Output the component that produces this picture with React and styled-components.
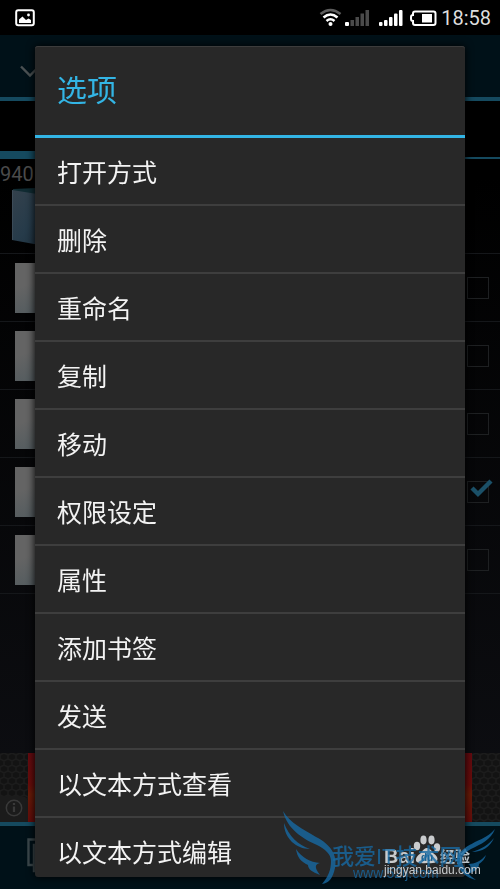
import React from 'react';
import styled, { createGlobalStyle } from 'styled-components';

const options = [
  '打开方式',
  '删除',
  '重命名',
  '复制',
  '移动',
  '权限设定',
  '属性',
  '添加书签',
  '发送',
  '以文本方式查看',
  '以文本方式编辑',
];

const files = [
  { id: 'file-1', checked: false },
  { id: 'file-2', checked: false },
  { id: 'file-3', checked: false },
  { id: 'file-4', checked: true },
  { id: 'file-5', checked: false },
];

const App = () => {
  return (
    <>
      <GlobalStyle />
      <Screen>
        <StatusBar>
          <svg width="20" height="18" viewBox="0 0 20 18">
            <rect x="1.2" y="1.2" width="17.6" height="15" rx="2" fill="none" stroke="#fff" strokeWidth="2" />
            <path d="M4 14V10.5L7.5 7.5L11 11L13.5 9.5L16 11V14Z" fill="#fff" />
            <circle cx="13.5" cy="6" r="1.4" fill="#fff" />
          </svg>
          <StatusRight>
            <StatusIcons />
            <Clock>18:58</Clock>
          </StatusRight>
        </StatusBar>
        <Header>
          <svg width="20" height="14" viewBox="0 0 20 14">
            <path d="M1 1.5L10 10.5L19 1.5" fill="none" stroke="#4b5153" strokeWidth="2.4" />
          </svg>
        </Header>
        <Tabs>
          <Tab $active />
          <Tab />
        </Tabs>
        <Path>940</Path>
        <FolderRow>
          <svg width="44" height="60" viewBox="0 0 44 60">
            <defs>
              <linearGradient id="folder" x1="0" y1="0" x2="1" y2="1">
                <stop offset="0" stopColor="#34414c" />
                <stop offset="0.5" stopColor="#263b4a" />
                <stop offset="1" stopColor="#1a2b38" />
              </linearGradient>
            </defs>
            <path d="M1 1L24 0L44 4V12L1 4Z" fill="#102b32" />
            <path d="M0 2L44 9V60L0 52Z" fill="url(#folder)" />
            <path d="M0 2V52" stroke="#4b5965" />
          </svg>
        </FolderRow>
        {files.map((file) => (
          <FileRow key={file.id}>
            <Thumb />
            <CheckLabel>
              <CheckInput type="checkbox" aria-label={file.id} defaultChecked={file.checked} />
              {file.checked && (
                <Tick width="24" height="20" viewBox="0 0 24 20">
                  <path d="M2 9L8 15L21 2" fill="none" stroke="#1b5068" strokeWidth="4.4" />
                </Tick>
              )}
            </CheckLabel>
          </FileRow>
        ))}
        <Ad>
          <Hexagons />
          <AdImage />
          <InfoIcon width="30" height="26" viewBox="0 0 30 26">
            <path d="M0 0H22Q29 1 29 9V26H0Z" fill="#1b1b1b" />
            <circle cx="14" cy="12" r="7.7" fill="none" stroke="#393939" strokeWidth="1.5" />
            <path d="M14 10.5V16M14 7V9" stroke="#393939" strokeWidth="2.2" />
          </InfoIcon>
        </Ad>
        <BottomBar>
          <svg width="36" height="40" viewBox="0 0 36 40">
            <path d="M24 1.5H1.5V27H7" fill="none" stroke="#3b474b" strokeWidth="2.4" />
            <path d="M7 7H34V33H7Z" fill="none" stroke="#3b474b" strokeWidth="2.4" />
          </svg>
        </BottomBar>
      </Screen>
      <Overlay>
        <Dialog role="dialog" aria-labelledby="options-title">
          <Title id="options-title">选项</Title>
          <List>
            {options.map((option) => (
              <li key={option}>
                <Option type="button">{option}</Option>
              </li>
            ))}
          </List>
        </Dialog>
      </Overlay>
      <Watermark />
    </>
  );
};

export default App;

const StatusIcons = () => (
  <svg width="120" height="20" viewBox="0 0 120 20">
    <g fill="none" strokeWidth="2.6">
      <path d="M1.5 6Q11.5 -2 21.5 6" stroke="#5d5d5d" />
      <path d="M4.5 9.5Q11.5 3.5 18.5 9.5M7.5 13Q11.5 9.5 15.5 13" stroke="#fff" />
    </g>
    <circle cx="11.5" cy="16" r="2" fill="#fff" />
    <rect x="26" y="14" width="4" height="4" rx="1" fill="#fff" />
    <g fill="#4a4a4a">
      <rect x="31.5" y="12" width="3.5" height="6" />
      <rect x="36.5" y="9" width="3.5" height="9" />
      <rect x="41.5" y="5.5" width="3.5" height="12.5" />
      <rect x="46.5" y="2" width="3.5" height="16" />
    </g>
    <g fill="#fff">
      <rect x="60" y="14" width="3.5" height="4" rx="1" />
      <rect x="65" y="12" width="3.5" height="6" rx="1" />
      <rect x="70" y="9" width="3.5" height="9" rx="1" />
      <rect x="75" y="5.5" width="3.5" height="12.5" rx="1" />
      <rect x="80" y="2" width="3.5" height="16" rx="1" />
      <rect x="103" y="6" width="10" height="8.5" />
    </g>
    <path d="M96 3.5H114.5Q116.5 3.5 116.5 5.5V15Q116.5 17 114.5 17H96Q94 17 94 15V13Q92 13 92 11V9Q92 7 94 7V5.5Q94 3.5 96 3.5Z" fill="none" stroke="#fff" strokeWidth="2" />
  </svg>
);

const Hexagons = () => (
  <HexSvg width="100%" height="100%">
    <defs>
      <pattern id="hex" width="8" height="12" patternUnits="userSpaceOnUse">
        <path d="M4 0L8 2V6L4 8L0 6V2ZM4 8V12" fill="none" stroke="#1c1c1c" strokeWidth="1.4" />
      </pattern>
    </defs>
    <rect width="100%" height="100%" fill="url(#hex)" />
  </HexSvg>
);

const Watermark = () => (
  <Mark width="222" height="84" viewBox="278 805 222 84">
    <g fill="#c9cbcd">
      <ellipse cx="417" cy="846" rx="3.2" ry="4.2" />
      <ellipse cx="423.5" cy="840" rx="3.1" ry="4.4" />
      <ellipse cx="431.5" cy="840" rx="3.1" ry="4.4" />
      <ellipse cx="437" cy="847.5" rx="3.2" ry="4.2" />
      <path d="M427 848Q430 848 433 853Q439 857 437 861Q435 864 427 863Q418 864 416 861Q415 857 421 853Q424 848 427 848Z" />
    </g>
    <text x="384" y="863" fontFamily="Liberation Sans, sans-serif" fontSize="20" fontWeight="700" fill="#c9cbcd">Bai</text>
    <text x="421" y="861" fontFamily="Liberation Sans, sans-serif" fontSize="10" fontWeight="700" fill="#1a5e8c">du</text>
    <text x="440" y="862" fontSize="15" fontWeight="700" fill="#b9c3c9">经验</text>
    <g fill="#1769a3" fillOpacity="0.8">
      <path d="M283 811C290 823 303 829 316 837C330 844 338 855 335 868C333 878 329 883 322 884C328 877 331 870 331 861C331 854 325 849 317 845C303 839 287 829 283 811Z" />
      <path d="M284 823C289 836 298 845 310 849C296 849 284 838 284 823Z" />
      <path d="M296 849C302 858 310 862 320 863C315 864 314 867 320 875C312 872 308 869 308 865C301 862 297 857 296 849Z" />
      <path d="M495 829C491 840 481 844 471 849C460 855 460 862 466 870C469 875 473 878 476 880C467 878 459 872 457 862C456 852 466 847 475 842C484 838 490 835 495 829Z" />
      <path d="M494 838C490 847 482 852 472 852C482 849 488 845 494 838Z" />
      <path d="M486 855C481 861 475 864 468 864C472 866 471 870 467 874C475 872 479 868 479 864C482 862 485 859 486 855Z" />
      <text x="332" y="864" fontFamily="Liberation Sans, Noto Sans CJK SC, sans-serif" fontSize="22" fontWeight="500">我爱IT技术网</text>
      <text x="353" y="878" fontFamily="Liberation Sans, sans-serif" fontSize="14">www.52ij.com</text>
    </g>
    <text x="384" y="874" fontFamily="Liberation Sans, sans-serif" fontSize="12" fill="#c9cbcd">jingyan.baidu.com</text>
  </Mark>
);

const GlobalStyle = createGlobalStyle`
  * {
    box-sizing: border-box;
  }
  body {
    margin: 0;
    background: #000;
    font-family: "Noto Sans", "Noto Sans CJK SC", sans-serif;
  }
`;

const Screen = styled.div`
  min-height: 100vh;
  display: flex;
  flex-direction: column;
  background: linear-gradient(#000 20%, #0d0e12 90%);
`;

const StatusBar = styled.div`
  height: 35px;
  padding: 1px 9px 0 15px;
  display: flex;
  align-items: center;
  justify-content: space-between;
  background: #000;
`;

const StatusRight = styled.div`
  display: flex;
  align-items: center;
  gap: 2px;
`;

const Clock = styled.span`
  color: #ddd;
  font-family: Roboto, sans-serif;
  font-size: 20px;
`;

const Header = styled.div`
  height: 66px;
  padding: 12px 20px 0;
  display: flex;
  align-items: center;
  background: #001118;
  border-bottom: 4px solid #154a5f;
`;

const Tabs = styled.div`
  height: 58px;
  display: flex;
  align-items: flex-end;
`;

const Tab = styled.div`
  flex: 1;
  border-bottom: ${(props) => (props.$active ? '8px' : '2px')} solid #154a5f;
`;

const Path = styled.div`
  height: 27px;
  color: #4b4b4b;
  font-family: Roboto, sans-serif;
  font-size: 20px;
  line-height: 30px;
`;

const FolderRow = styled.div`
  height: 68px;
  padding: 2px 12px;
  border-bottom: 1px solid #15171a;
`;

const FileRow = styled.div`
  height: 68px;
  padding: 0 11px 0 15px;
  display: flex;
  align-items: center;
  justify-content: space-between;
  border-bottom: 1px solid #15171a;
`;

const Thumb = styled.div`
  width: 40px;
  height: 50px;
  background: linear-gradient(160deg, #646464 40%, #505a5e);
`;

const CheckLabel = styled.label`
  position: relative;
  display: flex;
`;

const CheckInput = styled.input`
  appearance: none;
  width: 22px;
  height: 22px;
  margin: 0;
  border: 1px solid #1e2022;
`;

const Tick = styled.svg`
  position: absolute;
  left: 3px;
  top: -2px;
`;

const Ad = styled.div`
  position: relative;
  height: 69px;
  margin-top: auto;
  padding: 0 28px;
  display: flex;
  background: #131313;
`;

const HexSvg = styled.svg`
  position: absolute;
  inset: 0;
`;

const AdImage = styled.div`
  position: relative;
  flex: 1;
  background: linear-gradient(#650b10, #6a0d0b 45%, #6b1c08 60%, #650c0b);
`;

const InfoIcon = styled.svg`
  position: absolute;
  left: 0;
  bottom: 0;
  clip-path: inset(0 2px 0 0);
`;

const BottomBar = styled.div`
  height: 67px;
  padding: 12px 27px;
  background: #001118;
  border-top: 4px solid #154a5f;
`;

const Overlay = styled.div`
  position: fixed;
  inset: 0;
  padding: 46px 35px 12px;
  display: flex;
`;

const Dialog = styled.div`
  flex: 1;
  display: flex;
  flex-direction: column;
  overflow: hidden;
  background: #282828;
  border-radius: 3px;
  box-shadow: 0 0 8px #000, inset 0 1px #3c3c3c;
`;

const Title = styled.h1`
  flex: none;
  height: 92px;
  margin: 0;
  padding: 0 22px;
  color: #33b5e5;
  border-bottom: 3px solid #33b5e5;
  font-size: 30px;
  font-weight: 400;
  line-height: 88px;
`;

const List = styled.ul`
  flex: 1;
  min-height: 0;
  margin: 0;
  padding: 0;
  overflow: hidden;
  list-style: none;
`;

const Option = styled.button`
  width: 100%;
  height: 68px;
  padding: 0 22px;
  background: none;
  border: 0;
  border-bottom: 2px solid #3e3e3e;
  color: #f3f3f3;
  font-family: inherit;
  font-size: 25px;
  text-align: left;
  display: block;
`;

const Mark = styled.svg`
  position: fixed;
  right: 0;
  bottom: 0;
  pointer-events: none;
`;
